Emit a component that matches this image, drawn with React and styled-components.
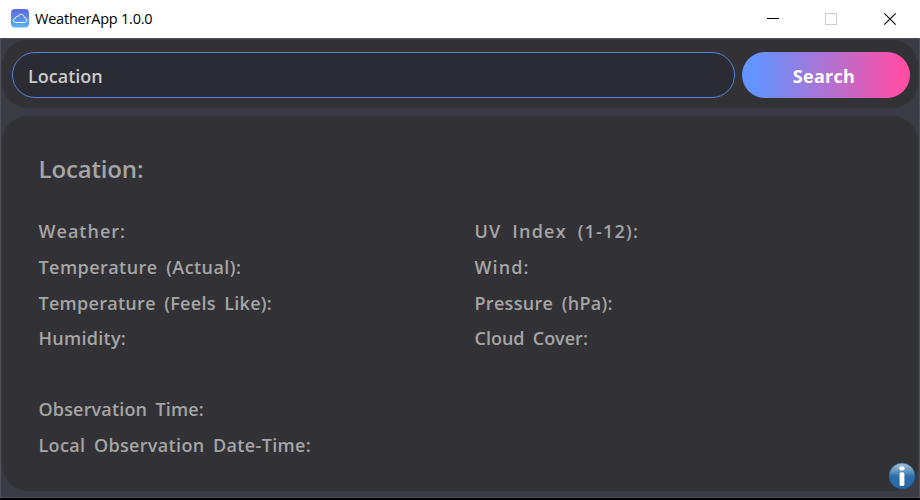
import React from 'react';
import styled, { createGlobalStyle } from 'styled-components';

const GlobalStyle = createGlobalStyle`
  * { box-sizing: border-box; }
  body { margin: 0; background: #3b3b46; overflow: hidden; }
`;

const Window = styled.div`
  width: 920px;
  height: 500px;
  display: flex;
  flex-direction: column;
  font-family: "Comic Sans MS", "Open Sans", sans-serif;
  font-weight: 600;
  color: #a5a5a5;
`;

const TitleBar = styled.header`
  height: 38px;
  flex: none;
  display: flex;
  align-items: center;
  padding-left: 11px;
  background: #fff;
  color: #000;
`;

const AppIcon = styled.svg`
  width: 18px;
  height: 19px;
  flex: none;
  margin-top: -2px;
`;

const AppTitle = styled.h1`
  margin: 0 auto 0 6px;
  font: 400 14.5px/20px "Open Sans", sans-serif;
  letter-spacing: -0.22px;
`;

const WindowControls = styled.svg`
  width: 154px;
  height: 38px;
`;

const Body = styled.main`
  flex: 1;
  display: flex;
  flex-direction: column;
  gap: 8px;
  padding: 1px 1px 6px;
  border: 1px solid #50505a;
  background: #3b3b46;
`;

const BottomEdge = styled.div`
  height: 2px;
  flex: none;
  background: #000;
`;

const Panel = styled.section`
  background: #323236;
  border-radius: 26px;
`;

const SearchPanel = styled(Panel)`
  height: 68px;
  flex: none;
  display: flex;
  gap: 7px;
  padding: 12px 8px 10px 10px;
`;

const SearchField = styled.div`
  width: 723px;
  height: 46px;
  display: flex;
  align-items: center;
  padding: 2px 0 0 15px;
  border: 1px solid #5584df;
  border-radius: 23px;
  background: #2b2b34;
  color: #cacaca;
  font-size: 18px;
  letter-spacing: 0;
`;

const SearchButton = styled.button`
  width: 168px;
  height: 46px;
  border: 0;
  padding: 2px 4px 0 0;
  border-radius: 23px;
  background: linear-gradient(90deg, #6394ff 0%, #6394ff 8%, #ff4ea5 95%);
  color: #fff;
  font: inherit;
  font-size: 18px;
  font-weight: 700;
  letter-spacing: 0.3px;
`;

const WeatherPanel = styled(Panel)`
  position: relative;
  flex: 1;
  padding: 35px 36px 0 36.5px;
`;

const Heading = styled.h2`
  margin: 0;
  font-size: 24px;
  line-height: 36px;
  font-weight: 600;
  letter-spacing: -0.15px;
`;

const Fields = styled.div`
  display: grid;
  grid-template-columns: 436px 1fr;
  grid-auto-rows: 35.8px;
  margin-top: ${p => p.$top}px;
`;

const Label = styled.span`
  font-size: 18px;
  line-height: 36px;
  white-space: pre;
  letter-spacing: ${p => p.$track}px;
  word-spacing: ${p => p.$words ?? 3.5}px;
`;

const InfoIcon = styled.svg`
  position: absolute;
  right: 2px;
  bottom: 1px;
  width: 28px;
  height: 28px;
`;

const conditions = [
  ['Weather:', 1],
  ['UV Index (1-12):', 1.2, 5],
  ['Temperature (Actual):', 0.44],
  ['Wind:', 1.1],
  ['Temperature (Feels Like):', 0.28],
  ['Pressure (hPa):', 0.3],
  ['Humidity:', 0.27],
  ['Cloud Cover:', 0],
];

const times = [
  ['Observation Time:', 0.16],
  ['Local Observation Date-Time:', 0.34],
];

export default function App() {
  return (
    <Window>
      <GlobalStyle />
      <TitleBar>
        <AppIcon viewBox="0 0 18 19">
          <defs>
            <linearGradient id="sky" x2="0" y2="1">
              <stop stopColor="#5f66dd" />
              <stop offset="1" stopColor="#56b4f0" />
            </linearGradient>
          </defs>
          <rect width="18" height="18.5" rx="4" fill="url(#sky)" />
          <path
            d="M4.3 13.5c-3-.3-2.600-4.200.2-4.200C4.500 7.500 6.300 6.800 7.300 7.400 8.800 4 13 5 13.300 8.700c3.500.2 3.300 4.600.3 4.800Z"
            fill="none" stroke="#fff" strokeWidth="1"
          />
        </AppIcon>
        <AppTitle>WeatherApp 1.0.0</AppTitle>
        <WindowControls viewBox="0 0 154 38" fill="none" shapeRendering="crispEdges">
          <path d="M1 18.5H13" stroke="#000" />
          <rect x="59.5" y="13.5" width="11" height="11" stroke="#ccc" />
          <path d="M118.3 13.3l11.4 11.4M129.7 13.3l-11.4 11.4" stroke="#000" strokeWidth="1.1" shapeRendering="auto" />
        </WindowControls>
      </TitleBar>
      <Body>
        <SearchPanel>
          <SearchField>Location</SearchField>
          <SearchButton>Search</SearchButton>
        </SearchPanel>
        <WeatherPanel>
          <Heading>Location:</Heading>
          <Fields $top={26}>
            {conditions.map(([text, track, words]) => (
              <Label key={text} $track={track} $words={words}>{text}</Label>
            ))}
          </Fields>
          <Fields $top={34.6}>
            {times.map(([text, track]) => (
              <React.Fragment key={text}>
                <Label $track={track}>{text}</Label>
                <span />
              </React.Fragment>
            ))}
          </Fields>
          <InfoIcon viewBox="0 0 28 28">
            <defs>
              <linearGradient id="ball" x2="0" y2="1">
                <stop stopColor="#a4c4da" />
                <stop offset="0.35" stopColor="#5c91bd" />
                <stop offset="0.5" stopColor="#2f6fac" />
                <stop offset="1" stopColor="#2664a8" />
              </linearGradient>
            </defs>
            <circle cx="14" cy="14" r="13" fill="url(#ball)" stroke="#24548a" strokeWidth="0.6" />
            <ellipse cx="14" cy="6.4" rx="2.7" ry="2.1" fill="#fff" />
            <rect x="11.6" y="10.3" width="4.8" height="13.7" rx="1.6" fill="#fff" />
          </InfoIcon>
        </WeatherPanel>
      </Body>
      <BottomEdge />
    </Window>
  );
}
